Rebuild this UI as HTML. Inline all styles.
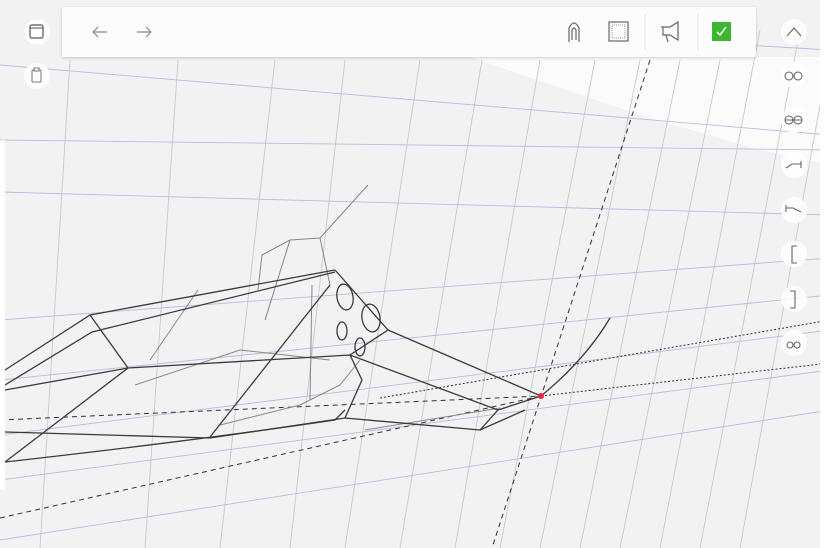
<!DOCTYPE html>
<html><head><meta charset="utf-8"><style>
html,body{margin:0;padding:0;width:830px;height:548px;overflow:hidden;background:#f2f2f2;font-family:"Liberation Sans",sans-serif}
svg{position:absolute;left:0;top:0}
.bar{position:absolute;left:62px;top:7px;width:694px;height:50px;background:#fcfcfc;box-shadow:0 1px 3px rgba(0,0,0,.18);border-radius:2px}
.rc{position:absolute;width:26px;height:26px;border-radius:13px;background:rgba(255,255,255,.85)}
</style></head><body>
<svg width="830" height="548" viewBox="0 0 830 548">
<polygon points="470,57 830,57 830,165 760,150 640,115" fill="#fbfbfb"/>
<g stroke="#c8c8d0" stroke-width="0.9" fill="none">
<line x1="70" y1="60" x2="40" y2="548"/>
<line x1="178" y1="60" x2="145" y2="548"/>
<line x1="275" y1="60" x2="220" y2="548"/>
<line x1="345" y1="60" x2="290" y2="548"/>
<line x1="420" y1="60" x2="345" y2="548"/>
<line x1="482" y1="60" x2="400" y2="548"/>
<line x1="540" y1="60" x2="455" y2="548"/>
<line x1="595" y1="60" x2="500" y2="548"/>
<line x1="640" y1="60" x2="540" y2="548"/>
<line x1="680" y1="60" x2="580" y2="548"/>
<line x1="720" y1="60" x2="620" y2="548"/>
<line x1="760" y1="30" x2="660" y2="548"/>
<line x1="800" y1="30" x2="700" y2="548"/>
<line x1="830" y1="50" x2="740" y2="548"/>
</g>
<g stroke="#b8bde0" stroke-width="0.9" fill="none">
<line x1="0" y1="65" x2="830" y2="135"/>
<line x1="0" y1="140" x2="830" y2="150"/>
<line x1="0" y1="192" x2="830" y2="215"/>
<line x1="0" y1="320" x2="830" y2="258"/>
<line x1="0" y1="380" x2="830" y2="295"/>
<line x1="0" y1="435" x2="830" y2="330"/>
<line x1="0" y1="480" x2="830" y2="370"/>
<line x1="0" y1="540" x2="830" y2="410"/>
<line x1="660" y1="40" x2="830" y2="50"/>
</g>
<g stroke="#333" fill="none" stroke-dasharray="5,4" stroke-width="1">
<line x1="650" y1="60" x2="492" y2="548"/>
<line x1="0" y1="420" x2="541" y2="396"/>
<line x1="0" y1="518" x2="541" y2="396"/>
</g>
<g stroke="#333" fill="none" stroke-dasharray="2,2" stroke-width="1">
<line x1="380" y1="398" x2="830" y2="320"/>
<line x1="541" y1="396" x2="830" y2="363"/>
</g>
<g stroke="#888" fill="none" stroke-width="1">
<polyline points="368,185 320,238 290,240 262,255 258,290"/>
<line x1="320" y1="238" x2="330" y2="285"/>
<line x1="290" y1="240" x2="265" y2="320"/>
<line x1="198" y1="290" x2="150" y2="360"/>
<polyline points="135,385 240,350 330,360"/>
<line x1="312" y1="285" x2="310" y2="400"/>
<polyline points="220,425 300,405 340,385 360,360"/>
<line x1="365" y1="430" x2="500" y2="408"/>
</g>
<g stroke="#3a3a3a" fill="none" stroke-width="1.3">
<polyline points="5,370 90,315 335,270"/>
<polyline points="5,385 92,332 335,272"/>
<line x1="90" y1="315" x2="128" y2="368"/>
<polyline points="5,432 210,438 345,418 480,430 525,410"/>
<line x1="5" y1="462" x2="128" y2="368"/>
<polyline points="5,390 128,368 350,355 498,410"/>
<line x1="210" y1="437" x2="330" y2="285"/>
<polyline points="335,270 388,330 350,355"/>
<polyline points="388,330 541,396 498,410 480,430"/>
<path d="M541,396 Q585,360 610,318"/>
<polyline points="350,355 362,380 345,418"/>
<path d="M5,462 Q200,440 335,420 L345,410"/>
<ellipse cx="345" cy="297" rx="8" ry="13" transform="rotate(-10 345 297)"/>
<ellipse cx="371" cy="318" rx="9" ry="14" transform="rotate(-10 371 318)"/>
<ellipse cx="342" cy="331" rx="5" ry="9"/>
<ellipse cx="360" cy="347" rx="5" ry="9"/>
</g>
<circle cx="541" cy="396" r="3" fill="#e8214d"/>
<rect x="0" y="140" width="5" height="350" fill="#fff"/>
<rect x="820" y="0" width="10" height="548" fill="#fff"/>
</svg>
<div class="rc" style="left:24px;top:19px"></div>
<div class="rc" style="left:24px;top:63px"></div>
<svg width="830" height="100" style="top:0">
<rect x="30" y="25" width="13" height="13" rx="2" fill="none" stroke="#555" stroke-width="1.2"/>
<line x1="30" y1="28" x2="43" y2="28" stroke="#555"/>
<rect x="32" y="70" width="9" height="12" rx="1" fill="none" stroke="#777"/>
<rect x="34" y="68" width="5" height="3" fill="#fff" stroke="#777"/>
</svg>
<div class="bar"></div>
<svg width="830" height="60" style="top:0">
<g stroke="#888" fill="none" stroke-width="1.2">
<path d="M107,36 H93 M93,36 L98,31 M93,36 L98,41" transform="translate(0,-4)"/>
<path d="M137,32 H151 M151,32 L146,27 M151,32 L146,37"/>
<path d="M569,42 V28 Q574,18 579,28 V42 M572,40 V30 Q574,26 576,30 V40" stroke="#666"/>
<rect x="609" y="22" width="19" height="19" stroke="#666"/>
<path d="M661,27 L670,27 L678,22 V40 L670,35 H666 L668,42 M663,27 V35 H666" stroke="#666"/>
</g>
<g fill="#777"><rect x="612" y="25" width="13" height="13" fill="none" stroke="#999" stroke-dasharray="1,1"/></g>
<line x1="645" y1="14" x2="645" y2="50" stroke="#e4e4e4"/>
<line x1="698" y1="14" x2="698" y2="50" stroke="#e4e4e4"/>
<rect x="712" y="22" width="19" height="19" fill="#3cb52f"/>
<path d="M717,32 L720,35 L726,27" stroke="#fff" fill="none" stroke-width="1.5"/>
</svg>
<div class="rc" style="left:781px;top:19px"></div>
<div class="rc" style="left:781px;top:62px"></div>
<div class="rc" style="left:781px;top:107px"></div>
<div class="rc" style="left:781px;top:152px"></div>
<div class="rc" style="left:781px;top:197px"></div>
<div class="rc" style="left:781px;top:241px"></div>
<div class="rc" style="left:781px;top:286px"></div>
<div class="rc" style="left:781px;top:330px"></div>
<svg width="830" height="548" style="top:0">
<g stroke="#666" fill="none" stroke-width="1.1">
<path d="M787,36 L794,28 L801,36"/>
<circle cx="789" cy="76" r="4"/><circle cx="798" cy="76" r="4"/>
<circle cx="789" cy="120" r="4"/><circle cx="798" cy="120" r="4"/><line x1="785" y1="120" x2="802" y2="120"/>
<path d="M786,168 L792,164 H801 M801,161 V168"/>
<path d="M786,205 V212 M786,208 H793 L801,212"/>
<path d="M797,246 H792 V263 H797"/>
<path d="M790,291 H795 V308 H790"/>
<circle cx="790" cy="345" r="3"/><circle cx="797" cy="345" r="3"/>
</g>
</svg>
</body></html>
